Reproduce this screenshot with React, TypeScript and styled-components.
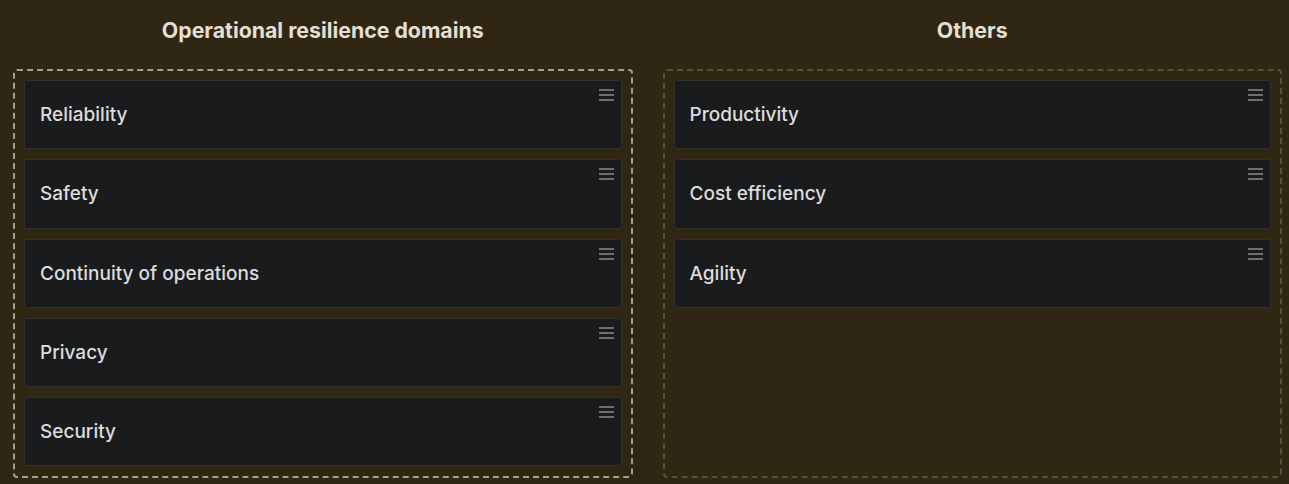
import styled, { createGlobalStyle } from 'styled-components'

const GlobalStyle = createGlobalStyle`
  body {
    margin: 0;
    background: #2f2714;
    font-family: Inter, "Noto Sans", sans-serif;
  }
`

const Page = styled.div`
  display: grid;
  grid-template-columns: 1fr 1fr;
  gap: 30px;
  padding: 0 7px 0 13px;
  height: 484px;
  box-sizing: border-box;
`

const Column = styled.div`
  display: flex;
  flex-direction: column;
`

const Title = styled.h2`
  margin: 0;
  padding-top: 18px;
  height: 69px;
  box-sizing: border-box;
  text-align: center;
  font-size: 21.3px;
  line-height: 24px;
  font-weight: 700;
  color: #e4dfd3;
`

const DropZone = styled.div<{ $active?: boolean }>`
  display: flex;
  flex-direction: column;
  gap: 10px;
  padding: 9px;
  height: 409px;
  box-sizing: border-box;
  border: 2px dashed ${p => (p.$active ? '#a59f8f' : '#5a4f34')};
  border-radius: 4px;
`

const Card = styled.div`
  display: flex;
  justify-content: space-between;
  height: 69.3px;
  flex-shrink: 0;
  box-sizing: border-box;
  padding: 0 7px 0 15px;
  background: #1a1b1d;
  border: 1px solid #33312d;
  border-radius: 3px;
`

const Label = styled.span`
  align-self: center;
  font-size: 19px;
  font-weight: 500;
  color: #dcdcdc;
`

const Handle = styled.div`
  margin-top: 8px;
  display: flex;
  flex-direction: column;
  gap: 3px;
  width: 15px;

  & span {
    display: block;
    height: 2px;
    background: #6f6f70;
  }
`

const domains = ['Reliability', 'Safety', 'Continuity of operations', 'Privacy', 'Security']
const others = ['Productivity', 'Cost efficiency', 'Agility']

function Item({ label }: { label: string }) {
  return (
    <Card>
      <Label>{label}</Label>
      <Handle>
        <span />
        <span />
        <span />
      </Handle>
    </Card>
  )
}

export default function App() {
  return (
    <>
      <GlobalStyle />
      <Page>
        <Column>
          <Title>Operational resilience domains</Title>
          <DropZone $active>
            {domains.map(d => <Item key={d} label={d} />)}
          </DropZone>
        </Column>
        <Column>
          <Title>Others</Title>
          <DropZone>
            {others.map(d => <Item key={d} label={d} />)}
          </DropZone>
        </Column>
      </Page>
    </>
  )
}
